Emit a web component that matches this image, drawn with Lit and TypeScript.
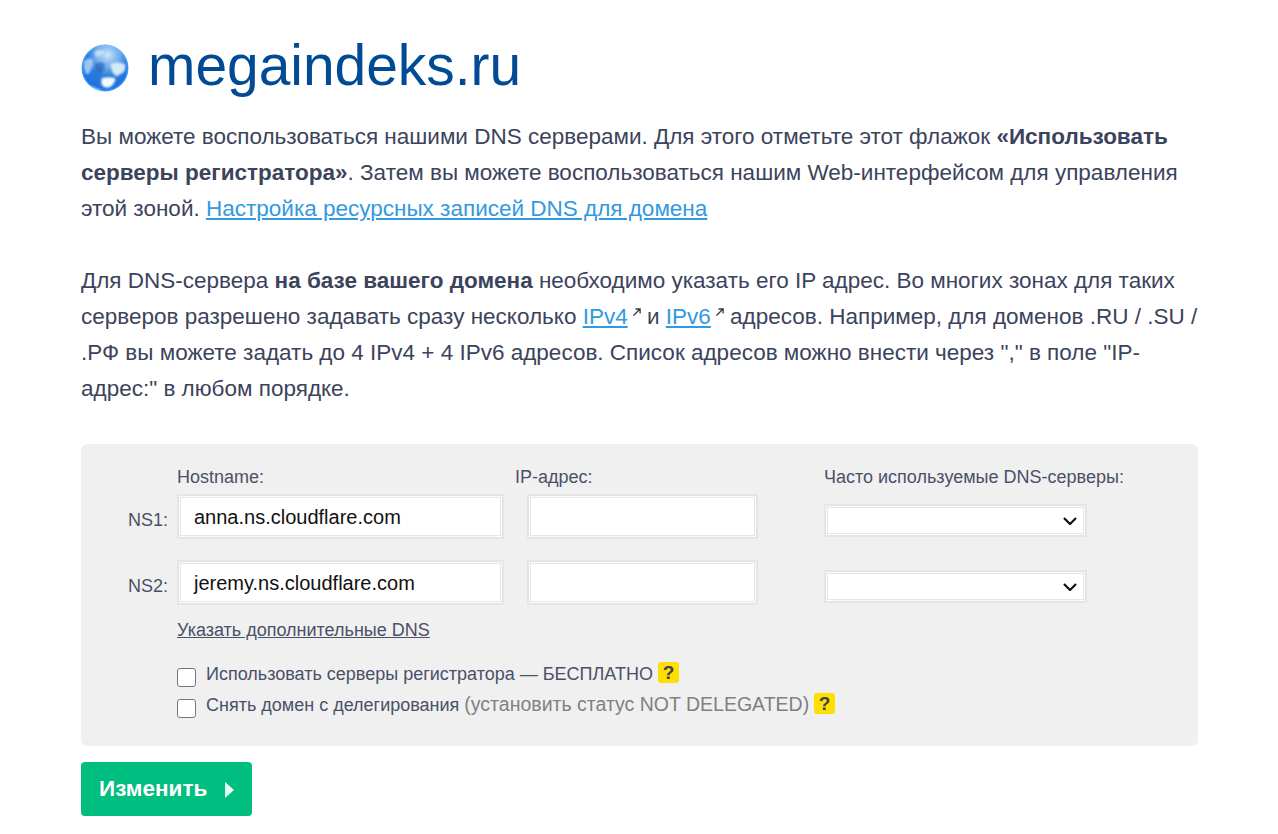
import { LitElement, html, css, svg } from "lit";
import { customElement } from "lit/decorators.js";

const globe = svg`<svg class="globe" viewBox="0 0 48 48" width="48" height="48" aria-hidden="true">
  <defs>
    <radialGradient id="sea" cx="50%" cy="50%" r="50%">
      <stop offset="0" stop-color="#2f7fd8"/>
      <stop offset="0.72" stop-color="#2576dc"/>
      <stop offset="0.9" stop-color="#1c70e4"/>
      <stop offset="1" stop-color="#4aa6f4"/>
    </radialGradient>
    <radialGradient id="sheen" cx="56%" cy="22%" r="46%">
      <stop offset="0" stop-color="#d6ebfc" stop-opacity=".95"/>
      <stop offset=".6" stop-color="#9ccbf5" stop-opacity=".6"/>
      <stop offset="1" stop-color="#8cc4f4" stop-opacity="0"/>
    </radialGradient>
    <filter id="soft" x="-20%" y="-20%" width="140%" height="140%"><feGaussianBlur stdDeviation="1.2"/></filter>
    <clipPath id="ball"><circle cx="24" cy="24" r="23.5"/></clipPath>
  </defs>
  <circle cx="24" cy="24" r="23.5" fill="url(#sea)"/>
  <g clip-path="url(#ball)">
    <circle cx="24" cy="24" r="23.5" fill="url(#sheen)"/>
    <g filter="url(#soft)">
      <path d="M3 17c2-3 6-3 8-2 2 4 1 8-1 11-1 3-3 5-5 4-2-4-3-9-2-13z" fill="#b9d8f4" opacity=".8"/>
      <path d="M14 7c4-2 8-1 10 1-1 3-5 3-7 5-2 1-4-3-3-6z" fill="#d8ebfb" opacity=".7"/>
      <path d="M30 20c4-2 9-2 14 0 1 3 0 6-1 8-4 2-5 4-8 4-2-1-4-3-4-6-1-3-2-5-1-6z" fill="#dcedfb" opacity=".95"/>
      <path d="M21 34c4-1 9-1 13 0 1 3-2 7-5 9-3 1-6 1-8-2-1-2-1-5 0-7z" fill="#f5fbff"/>
      <path d="M15 19c3-1 6-1 9 1 0 4-1 7-4 9-3 0-5-3-6-5 0-2 0-4 1-5z" fill="#1453ad" opacity=".55"/>
      <path d="M10 41c3 3 7 4 11 5l-2 2h-7z" fill="#a8e0fb" opacity=".75"/>
    </g>
  </g>
</svg>`;

const arrow = html`<svg class="ext" viewBox="0 0 10 10" width="10" height="10" aria-hidden="true"><path d="M1.5 8.5 7.5 2.5M3.5 2h4.6v4.6" fill="none" stroke="#333" stroke-width="1.3"/></svg>`;

@customElement("app-root")
export class AppRoot extends LitElement {
  static styles = css`
    :host { display: block; font-family: "Liberation Sans", Arial, sans-serif; color: #3c435c; background: #fff; }
    .page { box-sizing: border-box; width: 1278px; height: 834px; padding: 0 80px 0 81px; overflow: hidden; }
    .head { display: flex; align-items: center; gap: 19px; height: 64px; padding-top: 33px; }
    .globe { flex: none; margin-top: 6px; }
    h1 { margin: 0; font-weight: 400; font-size: 56.9px; line-height: 64px; color: #004b93; }
    p { margin: 0 -4px 0 0; font-size: 22.5px; line-height: 36px; }
    .p1 { margin-top: 22px; }
    .p2 { margin-top: 36px; }
    a { color: #3399e0; text-decoration: underline; }
    .ext { vertical-align: 7px; margin: 0 -1px 0 4px; }
    .panel { box-sizing: border-box; margin-top: 37px; height: 302px; background: #f0f0f0; border-radius: 6px; padding: 22px 0 0 0; }
    .grid { display: grid; grid-template-columns: 96px 327px 320px 263px; grid-template-rows: 28px 66px 45px; font-size: 18px; }
    .lab { line-height: 22px; white-space: nowrap; }
    .lab-ip { margin-left: 11px; }
    .ns { font-size: 18px; line-height: 45px; height: 45px; text-align: right; padding-right: 9px; position: relative; top: 4px; }
    .ns, .lab { color: #4a5068; }
    .input { box-sizing: border-box; height: 45px; background: #fff; border: 2px solid #e5e5e5; box-shadow: inset 0 0 0 1px #fbfbfb, inset 0 0 0 2px #e6e6e6; font: 20px/42px "Liberation Sans", Arial, sans-serif; color: #111; padding: 0 0 0 15px; }
    .ip { width: 231px; margin-left: 23px; }
    .host { width: 327px; }
    .sel { position: relative; box-sizing: border-box; height: 33px; width: 263px; background: #fff; border: 2px solid #e5e5e5; box-shadow: inset 0 0 0 1px #fbfbfb, inset 0 0 0 2px #e6e6e6; margin-top: 10px; }
    .sel svg { position: absolute; right: 8px; top: 11px; }
    .more { margin: 14px 0 0 96px; font-size: 18px; line-height: 22px; }
    .more a { color: #4a5068; }
    .checks { margin: 21px 0 0 96px; font-size: 18px; color: #4a5068; }
    .check { display: flex; align-items: flex-start; height: 31px; }
    .box { box-sizing: border-box; width: 19px; height: 19px; border: 1px solid #767676; border-radius: 3px; background: #fff; margin: 6px 0 0 0; flex: none; }
    .txt { margin-left: 10px; line-height: 24px; white-space: nowrap; }
    .muted { color: #808080; font-size: 19.5px; line-height: 20px; }
    .q { display: inline-block; width: 21px; height: 21px; margin-left: 5px; background: #ffdf00; border-radius: 3px; color: #3c4250; font-weight: 700; font-size: 19px; line-height: 21px; text-align: center; vertical-align: 1px; }
    .btn { display: flex; align-items: center; box-sizing: border-box; width: 171px; height: 54px; margin-top: 16px; background: #00bd80; border-radius: 4px; color: #fff; font-weight: 700; font-size: 22.5px; padding-left: 18px; }
    .btn svg { margin-left: 18px; margin-top: 2px; }
  `;

  private chevron() {
    return html`<svg viewBox="0 0 14 8" width="14" height="8" aria-hidden="true"><path d="M1 1 7 7 13 1" fill="none" stroke="#111" stroke-width="2.2"/></svg>`;
  }

  render() {
    return html`<div class="page">
      <div class="head">${globe}<h1>megaindeks.ru</h1></div>
      <p class="p1">Вы можете воспользоваться нашими DNS серверами. Для этого отметьте этот флажок <b>«Использовать серверы регистратора»</b>. Затем вы можете воспользоваться нашим Web-интерфейсом для управления этой зоной. <a href="#">Настройка ресурсных записей DNS для домена</a></p>
      <p class="p2">Для DNS-сервера <b>на базе вашего домена</b> необходимо указать его IP адрес. Во многих зонах для таких серверов разрешено задавать сразу несколько <a href="#">IPv4</a>${arrow} и <a href="#">IPv6</a>${arrow} адресов. Например, для доменов .RU / .SU / .РФ вы можете задать до 4 IPv4 + 4 IPv6 адресов. Список адресов можно внести через "," в поле "IP-адрес:" в любом порядке.</p>
      <div class="panel">
        <div class="grid">
          <div></div>
          <div class="lab">Hostname:</div>
          <div class="lab lab-ip">IP-адрес:</div>
          <div class="lab">Часто используемые DNS-серверы:</div>
          <div class="ns">NS1:</div>
          <div class="input host">anna.ns.cloudflare.com</div>
          <div class="input ip"></div>
          <div class="sel">${this.chevron()}</div>
          <div class="ns">NS2:</div>
          <div class="input host">jeremy.ns.cloudflare.com</div>
          <div class="input ip"></div>
          <div class="sel">${this.chevron()}</div>
        </div>
        <div class="more"><a href="#">Указать дополнительные DNS</a></div>
        <div class="checks">
          <div class="check"><span class="box"></span><span class="txt">Использовать серверы регистратора — БЕСПЛАТНО<span class="q">?</span></span></div>
          <div class="check"><span class="box"></span><span class="txt">Снять домен с делегирования <span class="muted">(установить статус NOT DELEGATED)</span><span class="q">?</span></span></div>
        </div>
      </div>
      <div class="btn">Изменить<svg viewBox="0 0 10 18" width="9" height="16" aria-hidden="true"><path d="M0 0 10 9 0 18z" fill="#e8fff6"/></svg></div>
    </div>`;
  }
}
